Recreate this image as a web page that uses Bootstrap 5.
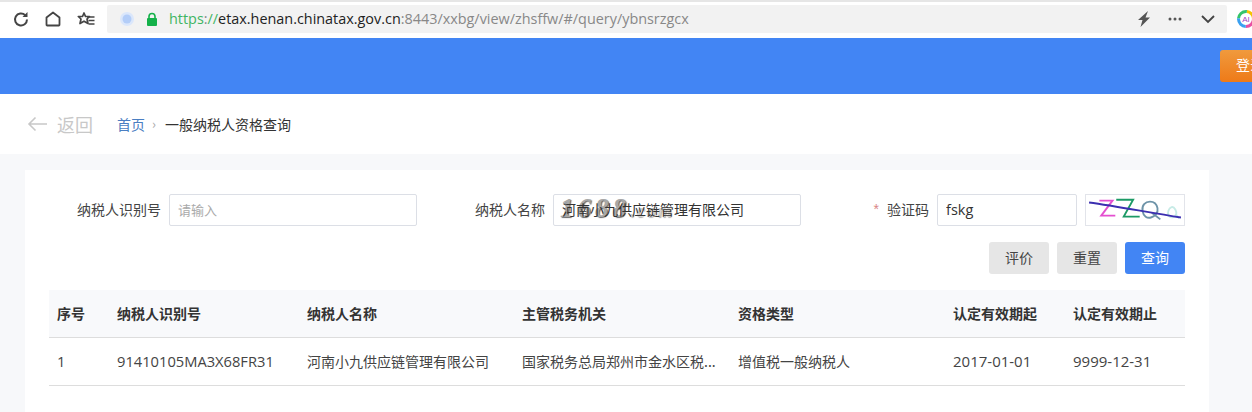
<!DOCTYPE html>
<html lang="zh-CN">
<head>
<meta charset="utf-8">
<title>一般纳税人资格查询</title>
<link href="https://cdn.jsdelivr.net/npm/bootstrap@5.3.0/dist/css/bootstrap.min.css" rel="stylesheet">
<style>
html,body{height:412px;overflow:hidden}
body{background:#f7f8fa;font-family:"Open Sans","Noto Sans CJK SC",sans-serif;font-size:14px;color:#333}
.cn{font-family:"Noto Sans CJK SC",sans-serif}
.tool-bar{height:38px;background:#fff;border-top:2px solid #e6e6e6;padding:3px 0 5px 0;overflow:hidden}
.tool-icon{width:18px;height:18px;flex:none}
.ic-a{margin-left:12px}.ic-b{margin-left:14px}.ic-c{margin-left:15px}
.addr{width:1120px;height:28px;flex:none;margin-left:12px;background:#f2f2f2;padding:0 12px;font-size:14.4px;white-space:nowrap;border-radius:2px}
.addr .g{color:#3fb563}.addr .d{color:#222}.addr .m{color:#888}
.lock{margin-left:10px}.url{margin-left:10px}
.addr-r{margin-left:auto;gap:16px}
.dots{margin-right:2px}
.ai-ring{width:18px;height:18px;margin-left:10px;flex:none}
.hero{height:56px;background:#4285f4;padding-top:12px}
.login{width:60px;height:32px;margin-left:auto;margin-right:-28px;background:linear-gradient(#f09a3d,#ee7a18);color:#fff;border-radius:3px 0 0 3px;padding:4px 0 0 16px;overflow:hidden;white-space:nowrap}
.crumb-bar{height:60px;background:#fff;padding-left:27px}
.back{color:#c8c8c8;font-size:18px;width:90px;gap:9px}
.crumb-bar .home{color:#4a7ec2;font-size:14px}
.crumb-bar .sep{color:#aaa;font-size:13px;margin:0 9px 0 7px}
.crumb-bar .cur{color:#333;font-size:14px}
.panel{margin:16px 43px 0 25px;background:#fff;padding:24px 24px 0;height:300px}
.form-row{margin-left:-16px;width:1152px}
.field{height:32px;color:#444}
.field label{margin-right:8px;padding-bottom:2px}
.star{color:#d98686;margin-right:8px;font-family:"Liberation Sans",sans-serif;padding-bottom:2px}
.inp{width:248px;height:32px;border:1px solid #dcdfe6;border-radius:2px;padding:0 8px 2px;font-size:14px;color:#333;box-shadow:none;background:transparent;position:relative}
.inp::placeholder{color:#aaa;font-size:13px}
.inp-s{width:140px;margin-right:8px;font-size:14.5px;font-family:"Open Sans",sans-serif}
.cap{width:100px;height:32px;flex:none;border:1px solid #e2e4ea;background:#fff}
.wrap-rel{position:relative;background:#fff}
.mark-1688{position:absolute;left:7px;top:-1px;font:italic bold 27px/30px "Liberation Serif",serif;letter-spacing:4px;color:#a8a8a8;text-shadow:1px 1px 1px #666;pointer-events:none;white-space:nowrap}
.mark-1688 small{font-size:18px;letter-spacing:2px;opacity:.5}
.btn-row{margin-top:16px;gap:8px}
.act{width:60px;height:32px;padding:0 0 2px;border:0;border-radius:3px;font-size:14px;background:#e6e6e6;color:#444}
.act.pri{background:#4285f4;color:#fff}
.tbl{margin:16px 0 0;width:1136px;table-layout:fixed;border-collapse:separate;border-spacing:0}
.tbl th,.tbl td{padding:0 8px;height:48px;vertical-align:middle;border-bottom:1px solid #ddd;white-space:nowrap;overflow:hidden;background:transparent;box-shadow:none;color:#444;font-size:14px}
.tbl th{background:#f8f9fb;color:#333;font-weight:700}
.w1{width:60px}.w2{width:190px}.w3{width:215px}.w4{width:216px}.w5{width:215px}.w6{width:120px}.w7{width:120px}
.tbl td.num{font-family:"Open Sans",sans-serif;font-size:14.7px}
.tbl td.date{font-family:"Open Sans",sans-serif;font-size:15px}
</style>
</head>
<body>
<div class="tool-bar d-flex align-items-center">
  <svg class="tool-icon ic-a" viewBox="0 0 18 18" fill="none" stroke="#444" stroke-width="2"><path d="M15 9.500a6 6 0 1 1-1.800-4.300"/><path d="M15.500 2v5h-5z" fill="#444" stroke="none"/></svg>
  <svg class="tool-icon ic-b" viewBox="0 0 18 18" fill="none" stroke="#444" stroke-width="1.800"><path d="M3 15.500h12a1 1 0 0 0 .5-1V7.500L9 2.500 2.500 7.500v7a1 1 0 0 0 .5 1z" stroke-linejoin="round"/></svg>
  <svg class="tool-icon ic-c" viewBox="0 0 18 18" fill="none" stroke="#444" stroke-width="1.700"><path d="M7 3l1.500 3.500H12.500L10 9l1 4.500-4-2.300-4 2.300 1-4.500-2.700-2.500h4.200z" stroke-linejoin="round"/><path d="M10 7h7.500M11.500 10.500h6M11.500 14h6"/></svg>
  <div class="addr d-flex align-items-center">
    <svg width="16" height="16" viewBox="0 0 16 16"><circle cx="8" cy="8" r="7" fill="#dbe7fb"/><circle cx="8" cy="8" r="4.500" fill="#b3cdf8"/></svg>
    <svg class="lock" width="14" height="16" viewBox="0 0 14 16"><path d="M4 8V5.500a3 3 0 0 1 6 0V8" fill="none" stroke="#14b14a" stroke-width="1.600"/><rect x="2" y="7" width="10" height="8" fill="#14b14a" rx="1"/></svg>
    <span class="url"><span class="g">https</span><span class="m">:</span><span class="g">//</span><span class="d">etax.henan.chinatax.gov.cn</span><span class="m">:8443/xxbg/view/zhsffw/#/query/ybnsrzgcx</span></span>
    <span class="addr-r d-flex align-items-center">
      <svg width="14" height="18" viewBox="0 0 14 18"><path d="M11 1L1 10h4.500L3.500 17 13 7.500H8.500z" fill="#555"/></svg>
      <svg class="dots" width="16" height="16" viewBox="0 0 16 16" fill="#555"><circle cx="3" cy="8" r="1.500"/><circle cx="8" cy="8" r="1.500"/><circle cx="13" cy="8" r="1.500"/></svg>
      <svg width="14" height="14" viewBox="0 0 14 14" fill="none" stroke="#444" stroke-width="1.900"><path d="M1 4l6 6 6-6"/></svg>
    </span>
  </div>
  <svg class="ai-ring" viewBox="0 0 18 18"><circle cx="9" cy="9" r="7.500" fill="none" stroke="#e84fa3" stroke-width="3" stroke-dasharray="12 36"/><circle cx="9" cy="9" r="7.500" fill="none" stroke="#f5c400" stroke-width="3" stroke-dasharray="12 36" stroke-dashoffset="12"/><circle cx="9" cy="9" r="7.500" fill="none" stroke="#35c46a" stroke-width="3" stroke-dasharray="12 36" stroke-dashoffset="24"/><circle cx="9" cy="9" r="7.500" fill="none" stroke="#3aa0f0" stroke-width="3" stroke-dasharray="12 36" stroke-dashoffset="36"/><text x="9" y="12" text-anchor="middle" font-size="8" fill="#a040c0" font-family="Liberation Sans">AI</text></svg>
</div>
<div class="hero d-flex"><div class="login cn">登录</div></div>
<div class="crumb-bar d-flex align-items-center cn">
  <div class="back d-flex align-items-center">
    <svg width="21" height="16" viewBox="0 0 21 16" fill="none" stroke="#c8c8c8" stroke-width="1.600"><path d="M20 8H2M8.500 1.500L2 8l6.500 6.500"/></svg>
    <span>返回</span>
  </div>
  <span class="home">首页</span><span class="sep">›</span><span class="cur">一般纳税人资格查询</span>
</div>
<div class="panel">
  <div class="row g-0 form-row cn">
    <div class="col-4 field d-flex justify-content-end align-items-center">
      <label for="i1">纳税人识别号</label>
      <input id="i1" class="form-control inp cn" placeholder="请输入">
    </div>
    <div class="col-4 field d-flex justify-content-end align-items-center">
      <label for="i2">纳税人名称</label>
      <div class="wrap-rel">
        <span class="mark-1688">1688<small>.com</small></span>
        <input id="i2" class="form-control inp cn" value="河南小九供应链管理有限公司">
      </div>
    </div>
    <div class="col-4 field d-flex justify-content-end align-items-center">
      <span class="star">*</span><label for="i3">验证码</label>
      <input id="i3" class="form-control inp inp-s" value="fskg">
      <svg class="cap" viewBox="0 0 100 32" fill="none" stroke-width="2">
        <path d="M12 6h14L14 22h15" stroke="#e44fd0"/>
        <path d="M30 5h18L38 23h17" stroke="#1c9a66"/>
        <path d="M66 7c-5 0-9 4-8 10s5 8 9 7 8-5 7-10-4-7-8-7zM68 19l9 7" stroke="#6d93a8"/>
        <path d="M89 13c-3 1-5 6-3 9s7 2 8-1-2-9-5-8zM93 20l4 5" stroke="#c7ebe6"/>
        <path d="M1 8c30 4 65 11 98 16" stroke="#3b2fb0"/>
      </svg>
    </div>
  </div>
  <div class="d-flex justify-content-end btn-row cn">
    <button type="button" class="btn act">评价</button>
    <button type="button" class="btn act">重置</button>
    <button type="button" class="btn act pri">查询</button>
  </div>
  <table class="table tbl cn">
    <colgroup><col class="w1"><col class="w2"><col class="w3"><col class="w4"><col class="w5"><col class="w6"><col class="w7"></colgroup>
    <thead><tr><th>序号</th><th>纳税人识别号</th><th>纳税人名称</th><th>主管税务机关</th><th>资格类型</th><th>认定有效期起</th><th>认定有效期止</th></tr></thead>
    <tbody><tr><td class="num">1</td><td class="num">91410105MA3X68FR31</td><td>河南小九供应链管理有限公司</td><td>国家税务总局郑州市金水区税...</td><td>增值税一般纳税人</td><td class="date">2017-01-01</td><td class="date">9999-12-31</td></tr></tbody>
  </table>
</div>
<script src="https://cdn.jsdelivr.net/npm/bootstrap@5.3.0/dist/js/bootstrap.bundle.min.js"></script>
</body>
</html>
